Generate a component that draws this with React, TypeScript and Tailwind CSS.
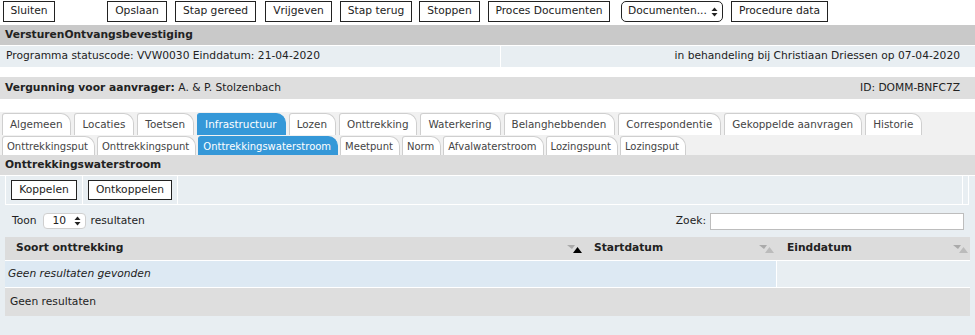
import React from "react";

const topButtons = [
  { label: "Sluiten", cls: "ml-[3px] w-[52px]" },
  { label: "Opslaan", cls: "ml-[52px] w-[60px]" },
  { label: "Stap gereed", cls: "ml-[8px] w-[81px]" },
  { label: "Vrijgeven", cls: "ml-[9px] w-[67px]" },
  { label: "Stap terug", cls: "ml-[8px] w-[72px]" },
  { label: "Stoppen", cls: "ml-[7px] w-[61px]" },
  { label: "Proces Documenten", cls: "ml-[8px] w-[122px]" },
];

const mainTabs = [
  "Algemeen",
  "Locaties",
  "Toetsen",
  "Infrastructuur",
  "Lozen",
  "Onttrekking",
  "Waterkering",
  "Belanghebbenden",
  "Correspondentie",
  "Gekoppelde aanvragen",
  "Historie",
];

const subTabs = [
  "Onttrekkingsput",
  "Onttrekkingspunt",
  "Onttrekkingswaterstroom",
  "Meetpunt",
  "Norm",
  "Afvalwaterstroom",
  "Lozingspunt",
  "Lozingsput",
];

const UpDown = () => (
  <svg width="7" height="10" viewBox="0 0 7 10" className="shrink-0">
    <polygon points="0.5,4 6.5,4 3.5,0.5" fill="#222" />
    <polygon points="0.5,6 6.5,6 3.5,9.5" fill="#222" />
  </svg>
);

const SortIcon = ({ active }: { active?: boolean }) => (
  <svg width="16" height="10" viewBox="0 0 16 10" className="shrink-0">
    <polygon points="0,1 8,1 5,5" fill="#aaa" />
    <polygon points="6,9 15,9 10.5,3" fill={active ? "#000" : "#bbb"} />
  </svg>
);

const Tab = ({ label, active, small }: { label: string; active?: boolean; small?: boolean }) => (
  <div
    className={
      (small ? "h-[19px] pl-[4px] pr-[6px] text-[10px] " : "h-[22px] pl-[7px] pr-[8px] text-[10.4px] ") +
      (active
        ? "bg-[#3598d8] border-[#3598d8] text-white "
        : "bg-white border-[#cfcfcf] text-[#444] ") +
      "flex items-center border border-b-0 rounded-tl-[3px] rounded-tr-[10px] whitespace-nowrap"
    }
  >
    {label}
  </div>
);

export default function App() {
  return (
    <div className="w-[975px] h-[335px] overflow-hidden bg-white font-['DejaVu_Sans',Verdana,sans-serif] text-[10.7px] text-[#222]">
      {/* toolbar */}
      <div className="flex pt-[1px] h-[25px]">
        {topButtons.map((b) => (
          <div
            key={b.label}
            className={b.cls + " h-[21px] border border-[#222] bg-white flex items-center justify-center"}
          >
            {b.label}
          </div>
        ))}
        <div className="ml-[11px] w-[102px] h-[21px] border border-[#222] rounded-[5px] bg-white flex items-center justify-between pl-[6px] pr-[4px] whitespace-nowrap">
          <span>Documenten...</span>
          <UpDown />
        </div>
        <div className="ml-[8px] w-[97px] h-[21px] border border-[#222] bg-white flex items-center justify-center">
          Procedure data
        </div>
      </div>

      <div className="h-[20px] bg-[#c9c9c9] flex items-center px-[5px] font-bold">
        VersturenOntvangsbevestiging
      </div>
      <div className="mt-[1px] h-[21px] flex bg-[#e8eef2]">
        <div className="w-[501px] flex items-center px-[6px] border-r border-white">
          Programma statuscode: VVW0030 Einddatum: 21-04-2020
        </div>
        <div className="flex-1 flex items-center justify-end pr-[15px]">
          in behandeling bij Christiaan Driessen op 07-04-2020
        </div>
      </div>

      <div className="mt-[10px] h-[22px] bg-[#dedede] flex items-center justify-between px-[5px] pr-[15px]">
        <div>
          <span className="font-bold">Vergunning voor aanvrager:</span> A. &amp; P. Stolzenbach
        </div>
        <div>ID: DOMM-BNFC7Z</div>
      </div>

      {/* tabs */}
      <div className="mt-[13px] bg-[#f1f1f1] pl-[2px] pt-[1px]">
        <div className="flex gap-[3px]">
          {mainTabs.map((t) => (
            <Tab key={t} label={t} active={t === "Infrastructuur"} />
          ))}
        </div>
        <div className="flex gap-[2px] mt-[1px]">
          {subTabs.map((t) => (
            <Tab key={t} label={t} small active={t === "Onttrekkingswaterstroom"} />
          ))}
        </div>
      </div>

      <div className="h-[21px] bg-[#dcdcdc] flex items-center px-[5px] font-bold border-b border-white">
        Onttrekkingswaterstroom
      </div>

      {/* panel */}
      <div className="bg-[#e8eef2] pb-[20px]">
        <div className="ml-[5px] mr-[6px] flex h-[29px] border-l border-b border-white">
          <div className="w-[77px] border-r border-white flex items-center pl-[5px]">
            <div className="w-[66px] h-[20px] border border-[#222] bg-white flex items-center justify-center">
              Koppelen
            </div>
          </div>
          <div className="w-[95px] border-r border-white flex items-center pl-[5px]">
            <div className="w-[84px] h-[20px] border border-[#222] bg-white flex items-center justify-center">
              Ontkoppelen
            </div>
          </div>
          <div className="flex-1 border-r border-white" />
          <div className="w-[6px] border-r border-white" />
        </div>

        <div className="h-[32px] flex items-center justify-between pl-[12px] pr-[11px]">
          <div className="flex items-center">
            <span>Toon</span>
            <div className="ml-[6px] w-[43px] h-[16px] border border-[#cfcfcf] rounded-[4px] bg-white flex items-center justify-between pl-[9px] pr-[4px]">
              <span>10</span>
              <UpDown />
            </div>
            <span className="ml-[5px]">resultaten</span>
          </div>
          <div className="flex items-center">
            <span>Zoek:</span>
            <div className="ml-[4px] w-[254px] h-[17px] border border-[#bdbdbd] bg-white" />
          </div>
        </div>

        <div className="ml-[5px] mr-[5px]">
          <div className="h-[24px] bg-[#dcdcdc] flex font-bold border-b border-white">
            <div className="w-[581px] flex items-center justify-between pl-[11px] pr-[3px]">
              <span>Soort onttrekking</span>
              <SortIcon active />
            </div>
            <div className="w-[192px] flex items-center justify-between pl-[8px] pr-[3px]">
              <span>Startdatum</span>
              <SortIcon />
            </div>
            <div className="flex-1 flex items-center justify-between pl-[9px] pr-[1px]">
              <span>Einddatum</span>
              <SortIcon />
            </div>
          </div>
          <div className="h-[27px] flex border-b border-white">
            <div className="w-[772px] bg-[#dde9f3] border-r border-white flex items-center pl-[3px] italic">
              Geen resultaten gevonden
            </div>
            <div className="flex-1" />
          </div>
          <div className="h-[28px] bg-[#dedede] flex items-center pl-[5px]">Geen resultaten</div>
        </div>
      </div>
    </div>
  );
}
